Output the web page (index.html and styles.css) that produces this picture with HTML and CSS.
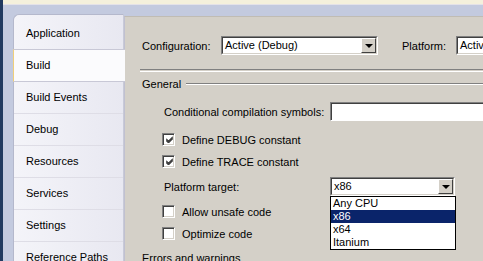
FILE: index.html
```html
<!DOCTYPE html>
<html lang="en">
<head>
    <meta charset="UTF-8">
    <title>Project Properties - Build</title>
    <link rel="stylesheet" href="styles.css">
</head>
<body>
    <div class="frame">
        <div class="edge"></div>
        <div class="main">
            <div class="topline"></div>
            <div class="workspace">
                <div class="tabs">
                    <div class="tab">Application</div>
                    <div class="tab selected">Build</div>
                    <div class="tab">Build Events</div>
                    <div class="tab">Debug</div>
                    <div class="tab">Resources</div>
                    <div class="tab">Services</div>
                    <div class="tab">Settings</div>
                    <div class="tab">Reference Paths</div>
                </div>
                <div class="content">
                    <div class="config-row">
                        <span class="label config-label">Configuration:</span>
                        <div class="combo config-combo">
                            <span class="combo-text">Active (Debug)</span>
                            <span class="combo-btn"><span class="arrow"></span></span>
                        </div>
                        <span class="label platform-label">Platform:</span>
                        <div class="combo platform-combo">
                            <span class="combo-text">Active (Any CPU)</span>
                        </div>
                    </div>
                    <div class="groove"></div>
                    <div class="group-title"><span>General</span><div class="group-line"></div></div>

                    <div class="field-row symbols-row">
                        <span class="label">Conditional compilation symbols:</span>
                        <div class="textbox"></div>
                    </div>

                    <div class="check-row first">
                        <span class="checkbox checked">
                            <svg width="7" height="7" viewBox="0 0 7 7"><path d="M0 2.5 L2.5 5 L7 0.5 M0 3.5 L2.5 6 L7 1.5 M0 4.5 L2.5 7 L7 2.5" stroke="#000" stroke-width="1" fill="none"/></svg>
                        </span>
                        <span class="label">Define DEBUG constant</span>
                    </div>
                    <div class="check-row">
                        <span class="checkbox checked">
                            <svg width="7" height="7" viewBox="0 0 7 7"><path d="M0 2.5 L2.5 5 L7 0.5 M0 3.5 L2.5 6 L7 1.5 M0 4.5 L2.5 7 L7 2.5" stroke="#000" stroke-width="1" fill="none"/></svg>
                        </span>
                        <span class="label">Define TRACE constant</span>
                    </div>

                    <div class="field-row platform-row">
                        <span class="label">Platform target:</span>
                        <div class="combo target-combo">
                            <span class="combo-text">x86</span>
                            <span class="combo-btn"><span class="arrow"></span></span>
                            <ul class="droplist">
                                <li>Any CPU</li>
                                <li class="hl">x86</li>
                                <li>x64</li>
                                <li>Itanium</li>
                            </ul>
                        </div>
                    </div>

                    <div class="check-row unsafe">
                        <span class="checkbox"></span>
                        <span class="label">Allow unsafe code</span>
                    </div>
                    <div class="check-row">
                        <span class="checkbox"></span>
                        <span class="label">Optimize code</span>
                    </div>

                    <div class="group-title errors"><span>Errors and warnings</span></div>
                </div>
            </div>
        </div>
    </div>
</body>
</html>
```
FILE: styles.css
```css
body { margin: 0; padding: 0; font-family: 'Liberation Sans', Arial, sans-serif; font-size: 11px; color: #000; overflow: hidden; }
.frame { display: flex; width: 483px; height: 261px; overflow: hidden; }
.edge { width: 3px; background-color: #213a60; flex: none; }
.main { flex: 1; display: flex; flex-direction: column; min-width: 0; }
.topline { height: 4px; background-color: #f4f0dc; border-bottom: 1px solid #e4e2e8; flex: none; }
.workspace { flex: 1; display: flex; background-color: #c3cadf; padding: 9px 0 0 10px; }

/* Tab list on the left */
.tabs {
    width: 109px;
    flex: none;
    padding-top: 3px;
    background: linear-gradient(to right, #f4f4f9, #e8e8f1);
    border: 1px solid #b4b8cc;
    border-right-color: #c8cad8;
    border-bottom: none;
    border-radius: 6px 0 0 0;
}
.tab { height: 31px; line-height: 31px; padding-left: 12px; border-bottom: 1px solid #dedde6; white-space: nowrap; }
.tab.selected { background: #fbfbfd; border-left: 1px solid #f0cf7a; margin-left: -1px; margin-right: -2px; position: relative; border-top: 1px solid #c8c8d6; margin-top: -1px; border-bottom-color: #c8c8d6; }

/* Content panel */
.content { flex: 1; background-color: #d4d0c8; padding: 0 0 0 17px; margin-top: 2px; border-top: 1px solid #c0bcb4; border-left: 1px solid #c0c0d0; min-width: 0; }
.config-row { display: flex; align-items: center; margin-top: 19px; height: 19px; white-space: nowrap; }
.config-label { width: 79px; flex: none; }
.platform-label { margin-left: 24px; width: 54px; flex: none; }

.combo { position: relative; height: 19px; background: #fff; border: 1px solid; border-color: #808080 #fff #fff #808080; box-sizing: border-box; display: flex; flex: none; }
.combo::before { content: ''; position: absolute; left: 0; top: 0; right: 0; bottom: 0; border: 1px solid; border-color: #404040 #d4d0c8 #d4d0c8 #404040; pointer-events: none; }
.combo-text { flex: 1; padding-left: 3px; line-height: 17px; overflow: hidden; white-space: nowrap; }
.combo-btn { width: 15px; margin: 1px 1px 1px 0; background: #d4d0c8; border: 1px solid; border-color: #fff #404040 #404040 #fff; box-sizing: border-box; display: flex; align-items: center; justify-content: center; position: relative; z-index: 1; }
.arrow { width: 0; height: 0; border-left: 4px solid transparent; border-right: 4px solid transparent; border-top: 4px solid #000; margin-left: 1px; }
.config-combo { width: 157px; }
.platform-combo { width: 120px; }

.groove { height: 1px; border-top: 1px solid #808080; border-bottom: 1px solid #fff; margin: 14px 0 0 -2px; }
.group-title { display: flex; align-items: center; height: 14px; margin-top: 5px; white-space: nowrap; }
.group-line { flex: 1; height: 0; border-top: 1px solid #808080; border-bottom: 1px solid #fff; margin-left: 5px; }

.field-row { display: flex; align-items: center; padding-left: 22px; height: 19px; white-space: nowrap; }
.symbols-row { margin-top: 11px; }
.symbols-row .label { width: 166px; flex: none; }
.textbox { width: 160px; height: 19px; flex: none; background: #fff; border: 1px solid; border-color: #808080 #fff #fff #808080; box-sizing: border-box; box-shadow: inset 1px 1px 0 #404040; }

.check-row { display: flex; align-items: center; padding-left: 20px; height: 13px; margin-top: 9px; white-space: nowrap; }
.check-row.first { margin-top: 12px; }
.checkbox { width: 13px; height: 13px; flex: none; box-sizing: border-box; background: #fff; border: 1px solid; border-color: #808080 #fff #fff #808080; box-shadow: inset 1px 1px 0 #404040, inset -1px -1px 0 #d4d0c8; margin-right: 7px; display: flex; align-items: center; justify-content: center; }
.checkbox svg { margin: 0 0 0 1px; }

.platform-row { margin-top: 9px; }
.platform-row .label { width: 166px; flex: none; }
.target-combo { width: 125px; }
.check-row.unsafe { margin-top: 9px; }

.droplist { position: absolute; left: -1px; top: 18px; width: 126px; margin: 0; padding: 0; list-style: none; background: #fff; border: 1px solid #000; box-sizing: border-box; z-index: 2; }
.droplist li { height: 13px; line-height: 13px; padding-left: 2px; }
.droplist li.hl { background: #0a246a; color: #fff; }

.group-title.errors { margin-top: 11px; }
```
